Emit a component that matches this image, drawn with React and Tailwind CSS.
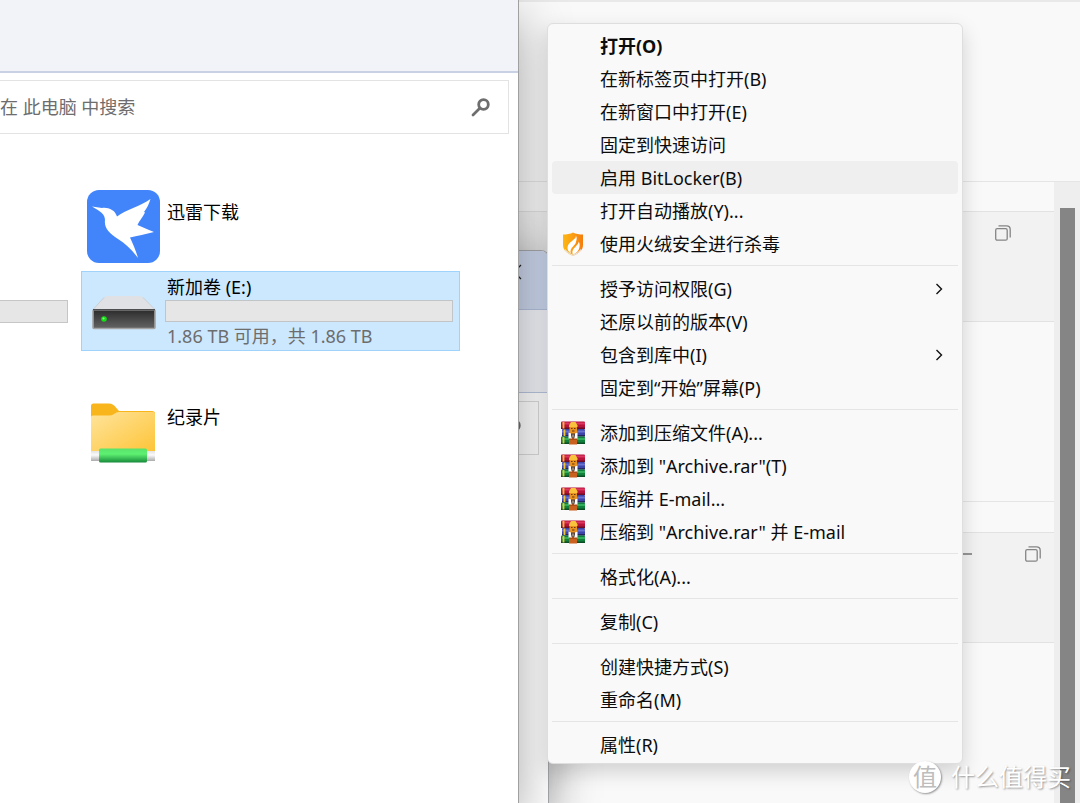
import React from 'react';

const menuGroups = [
  [
    { label: '打开(O)', bold: true },
    { label: '在新标签页中打开(B)' },
    { label: '在新窗口中打开(E)' },
    { label: '固定到快速访问' },
    { label: '启用 BitLocker(B)', active: true },
    { label: '打开自动播放(Y)...' },
    { label: '使用火绒安全进行杀毒', icon: ShieldIcon },
  ],
  [
    { label: '授予访问权限(G)', submenu: true },
    { label: '还原以前的版本(V)' },
    { label: '包含到库中(I)', submenu: true },
    { label: '固定到“开始”屏幕(P)' },
  ],
  [
    { label: '添加到压缩文件(A)...', icon: RarIcon },
    { label: '添加到 "Archive.rar"(T)', icon: RarIcon },
    { label: '压缩并 E-mail...', icon: RarIcon },
    { label: '压缩到 "Archive.rar" 并 E-mail', icon: RarIcon },
  ],
  [{ label: '格式化(A)...' }],
  [{ label: '复制(C)' }],
  [{ label: '创建快捷方式(S)' }, { label: '重命名(M)' }],
  [{ label: '属性(R)' }],
];

function ShieldIcon() {
  return (
    <svg width="24" height="24" viewBox="0 0 24 24" aria-hidden="true">
      <defs>
        <linearGradient id="shield" x1="0" y1="0" x2="1" y2="0">
          <stop offset="0" stopColor="#fdb813" />
          <stop offset="0.5" stopColor="#fb9d14" />
          <stop offset="1" stopColor="#f57c0c" />
        </linearGradient>
      </defs>
      <g transform="translate(1 0)">
        <path d="M11 0.5C13.500 2 17.500 2.600 21 2.600V13C21 18.500 16.500 21.500 11 23.800C5.500 21.500 1 18.500 1 13V2.600C4.500 2.600 8.500 2 11 0.500Z" fill="url(#shield)" />
        <path d="M13.800 3.800C14.500 7 8.500 9 6.200 13C4.500 16.500 6.200 19.500 8.800 21.300C8 18.500 9 16.500 11 14.500C13 12.500 13.800 11.500 14 9.800C15.200 6.500 14.800 5 13.800 3.800Z" fill="#fff" />
        <path d="M16.800 9.500C16.500 13 11.500 15.500 10.500 19C10.200 20.500 10.500 21.800 11 22.600C14 21.500 16 19.500 17 17C18 14.500 17.900 11.500 16.800 9.500Z" fill="#fff" />
        <path d="M3 17.500C5 20.500 8 22 11 23.300C14 22 17 20.500 19 17.500" fill="none" stroke="#e9e4dc" strokeWidth="1.200" />
      </g>
    </svg>
  );
}

function RarIcon() {
  return (
    <svg width="24" height="24" viewBox="0 0 24 24" aria-hidden="true">
      <rect x="0" y="0.500" width="24" height="7.500" rx="1" fill="#b5123c" />
      <rect x="1" y="1.500" width="23" height="2" fill="#dd3660" />
      <rect x="0" y="6.500" width="24" height="1.500" fill="#6f0d26" />
      <rect x="1" y="8" width="23" height="7.500" rx="1" fill="#3d45a8" />
      <rect x="1" y="9.500" width="23" height="2" fill="#6a74cf" />
      <rect x="1" y="14" width="23" height="1.500" fill="#23265f" />
      <rect x="0" y="15.500" width="24" height="7.500" rx="1" fill="#11803a" />
      <rect x="1" y="17" width="23" height="2" fill="#31ad5b" />
      <rect x="0" y="21.500" width="24" height="1.500" fill="#0a4d25" />
      <path d="M2.500 1V7.500M3.500 8.500V15M2.500 16V22.500" stroke="#f0c433" strokeWidth="1.800" />
      <rect x="8" y="16" width="8" height="7.500" fill="#c9601f" />
      <path d="M8 18H16" stroke="#8c3a10" />
      <rect x="8.500" y="2.500" width="7.500" height="11" rx="2" fill="#e89320" />
      <path d="M8 4.500L10 1H14.500L16.500 4.500V6H8Z" fill="#f8c23c" />
      <path d="M10 7.500H11.500M13 7.500H14.500M11 10H13.500" stroke="#6c3508" strokeWidth="1.200" />
      <path d="M7.500 11.500L10 12.500L11 17.500H7.500ZM16.500 11.500L14 12.500L13 17.500H16.500Z" fill="#fff" />
      <path d="M10 12.500H14L13.300 17H10.700Z" fill="#4a3530" />
      <rect x="11.300" y="13.500" width="1.400" height="3" fill="#b9a58c" />
    </svg>
  );
}

function CopyIcon() {
  return (
    <svg width="16" height="16" viewBox="0 0 16 16" fill="none" stroke="#858585" strokeWidth="1.300" aria-hidden="true">
      <rect x="0.700" y="3.700" width="11.500" height="11.500" rx="1.500" />
      <path d="M3.500 0.800H11.500Q15.200 0.800 15.200 4.500V12.500" />
    </svg>
  );
}

function BirdIcon() {
  return (
    <svg width="73" height="73" viewBox="0 0 73 73" aria-hidden="true">
      <rect width="73" height="73" rx="12" fill="#4285fb" />
      <path d="M5 16.500L15 18C18 17.500 22 18 25 20C28 21.500 29 24 30 26.500C38 20 54 16 63.500 9C62 14 60 18 57 22L58 22.500C56 27 52 31 50.500 35C56 37 61 40 67 42C59 44 50 46 43 47.500C46 54 49 61 51 68C45 60 38 53 31 49C22 43 17 38 18 30C18 24 13 21 5 16.500Z" fill="#fff" />
    </svg>
  );
}

function DriveIcon() {
  return (
    <svg width="64" height="34" viewBox="0 0 64 34" aria-hidden="true">
      <defs>
        <linearGradient id="drive" x1="0" y1="0" x2="0" y2="1">
          <stop offset="0" stopColor="#2c2c2c" />
          <stop offset="1" stopColor="#646464" />
        </linearGradient>
      </defs>
      <path d="M14.500 0H48.500L51 1.500L63 13.500H1L12 1.500Z" fill="#dfe1e4" />
      <path d="M51 1.500L63 13.500M12 1.500L1 13.500" stroke="#c6c9cd" strokeWidth="0.800" />
      <rect x="1" y="14" width="62" height="18.500" rx="1" fill="url(#drive)" stroke="#a3a3a3" strokeWidth="1.600" />
      <path d="M1 13.800H63" stroke="#242424" />
      <circle cx="12" cy="23" r="2.800" fill="#16dc16" />
      <circle cx="11.500" cy="22.500" r="1" fill="#9bff8f" />
    </svg>
  );
}

function FolderIcon() {
  return (
    <svg width="66" height="60" viewBox="0 0 66 60" aria-hidden="true">
      <defs>
        <linearGradient id="folder" x1="0" y1="0" x2="1" y2="1">
          <stop offset="0" stopColor="#ffe49c" />
          <stop offset="1" stopColor="#fdc437" />
        </linearGradient>
        <linearGradient id="cable" x1="0" y1="0" x2="0" y2="1">
          <stop offset="0" stopColor="#5be36c" />
          <stop offset="0.400" stopColor="#5df071" />
          <stop offset="1" stopColor="#178a3a" />
        </linearGradient>
        <linearGradient id="pipe" x1="0" y1="0" x2="0" y2="1">
          <stop offset="0" stopColor="#e3e3e3" />
          <stop offset="0.400" stopColor="#fafafa" />
          <stop offset="1" stopColor="#ababab" />
        </linearGradient>
      </defs>
      <path d="M1 3Q1 0.500 3.500 0.500H19Q23 0.500 25.500 4L29 8H62Q65 8 65 11V20H1Z" fill="#f9b61c" />
      <path d="M1 14Q1 12.500 3 12.500H19Q22 12.500 24 11L26.500 9.500Q27.500 9 29 9H63Q65 9 65 11V49H1Z" fill="url(#folder)" />
      <rect x="1" y="48" width="64" height="10" fill="url(#pipe)" />
      <rect x="9" y="45.500" width="48" height="14" rx="1.500" fill="url(#cable)" />
    </svg>
  );
}

function SearchIcon() {
  return (
    <svg width="19" height="19" viewBox="0 0 19 19" fill="none" stroke="#6e6e6e" aria-hidden="true">
      <circle cx="12.500" cy="6.500" r="4.800" strokeWidth="2.800" />
      <path d="M9 10L2 17" strokeWidth="2.800" strokeLinecap="round" />
    </svg>
  );
}

function Browser() {
  return (
    <div className="flex min-h-screen flex-col border-t-2 border-[#e9e9e9] bg-[#f9f9f9]">
      <div className="h-[180px] shrink-0 border-b border-[#e5e5e5]" />
      <div className="flex flex-1">
        <div className="flex-1 pt-[29px]">
          <div className="flex h-[111px] justify-end border-y border-[#e2e2e2] bg-[#f2f2f2] pt-[13px] pr-[43px]">
            <button aria-label="还原" className="h-4 w-4"><CopyIcon /></button>
          </div>
          <div className="h-[180px] border-b border-[#e5e5e5]" />
          <div className="mt-[30px] flex h-[111px] justify-end gap-[53px] border-y border-[#e2e2e2] bg-[#f2f2f2] pt-[13px] pr-[13px]">
            <button aria-label="最小化" className="flex h-4 w-4 items-center">
              <span className="h-[2px] w-full bg-[#959595]" />
            </button>
            <button aria-label="还原" className="h-4 w-4"><CopyIcon /></button>
          </div>
        </div>
        <div className="flex w-[26px] justify-center bg-[#eeeeee] pt-[26px]">
          <div className="w-[15px] bg-[#858585]" />
        </div>
      </div>
    </div>
  );
}

function BackWindow() {
  return (
    <div className="absolute top-[250px] bottom-0 left-0 w-[549px] overflow-hidden rounded-tr-lg border-t border-r border-[#a5a7ab] bg-white shadow-[0_12px_50px_rgba(0,0,0,0.4)]">
      <div className="flex h-[59px] justify-end border-b border-[#b3c0dc] bg-[#cbd6ec] pt-[12px] pr-[25px]">
        <svg width="12" height="18" viewBox="0 0 12 18" fill="none" stroke="#222" strokeWidth="1.300" aria-hidden="true">
          <path d="M10 2L3 9L10 16" />
        </svg>
      </div>
      <div className="h-[83px] border-b border-[#b9c6df] bg-[#f0f2f8]" />
      <div className="mt-[8px] mr-[9px] flex h-[54px] items-center justify-end border border-[#dcdcdc] pr-[17px]">
        <SearchIcon />
      </div>
    </div>
  );
}

function Explorer() {
  return (
    <div className="absolute inset-y-0 left-0 flex w-[519px] flex-col border-r border-[#a0a0a0] bg-white shadow-[0_20px_50px_rgba(0,0,0,0.35)]">
      <div className="h-[73px] border-b-2 border-[#c9d1e4] bg-[#f1f3f9]" />
      <label className="mt-[7px] mr-[9px] flex h-[54px] items-center border border-l-0 border-[#e3e3e3] pr-[18px]">
        <input
          type="search"
          aria-label="搜索"
          placeholder="在 此电脑 中搜索"
          className="min-w-0 flex-1 bg-transparent text-lg text-black outline-none placeholder:text-[#6d6d6d]"
        />
        <SearchIcon />
      </label>
      <div className="flex gap-[13px] pt-[56px]">
        <div className="mt-[110px] h-[23px] w-[68px] border border-l-0 border-[#c6c6c6] bg-[#e6e6e6]" />
        <div className="w-[379px] text-lg leading-6 text-black">
          <button className="flex w-full gap-[7px] pl-[6px] text-left">
            <BirdIcon />
            <span className="pt-[10px]">迅雷下载</span>
          </button>
          <button className="mt-[8px] flex h-20 w-full items-start gap-[9px] border border-[#a0d3fb] bg-[#cce8ff] pr-[6px] pl-[10px] text-left">
            <span className="pt-[24px]"><DriveIcon /></span>
            <span className="flex-1 pt-[3px]">
              <span className="block pl-[2px]">新加卷 (E:)</span>
              <span className="mt-px block h-[22px] border border-[#c2c5c8] bg-[#e6e6e6]" />
              <span className="mt-[2px] block pl-[2px] text-[#6d6d6d]">1.86 TB 可用，共 1.86 TB</span>
            </span>
          </button>
          <button className="mt-[52px] flex w-full gap-[11px] pl-[9px] text-left">
            <FolderIcon />
            <span className="pt-[2px]">纪录片</span>
          </button>
        </div>
      </div>
    </div>
  );
}

function MenuItem({ item }) {
  const Icon = item.icon;
  return (
    <button
      role="menuitem"
      className={`flex h-[33px] w-full items-center rounded pr-[15px] pl-[9px] text-left ${item.bold ? 'font-bold' : ''} ${item.active ? 'bg-[#efefef]' : 'hover:bg-[#efefef]'}`}
    >
      <span className="flex w-[39px]">{Icon && <Icon />}</span>
      <span className="flex-1 whitespace-nowrap">{item.label}</span>
      {item.submenu && (
        <svg width="8" height="12" viewBox="0 0 8 12" fill="none" stroke="#111" strokeWidth="1.400" aria-hidden="true">
          <path d="M1.500 1L6.500 6L1.500 11" />
        </svg>
      )}
    </button>
  );
}

function ContextMenu() {
  return (
    <div
      role="menu"
      className="absolute top-[23px] left-[547px] w-[416px] rounded-md border border-[#dedede] bg-[#f9f9f9] px-1 pt-[5px] pb-[2px] text-lg text-[#0c0c0c] shadow-[0_8px_20px_rgba(0,0,0,0.16)]"
    >
      {menuGroups.map((group, i) => (
        <React.Fragment key={i}>
          {i > 0 && <div role="separator" className="mt-[5px] mb-[6px] h-px bg-[#e5e5e5]" />}
          {group.map((item) => (
            <MenuItem key={item.label} item={item} />
          ))}
        </React.Fragment>
      ))}
    </div>
  );
}

function Watermark() {
  return (
    <div className="absolute right-[9px] bottom-[8px] flex items-center gap-[10px] text-white">
      <span className="flex h-8 w-8 items-center justify-center rounded-full bg-white text-2xl leading-none text-[#bdbdbd] shadow-[1px_1px_2px_rgba(0,0,0,0.4)]">
        值
      </span>
      <span className="text-2xl leading-9 [text-shadow:1px_1px_2px_rgba(0,0,0,0.4)]">什么值得买</span>
    </div>
  );
}

export default function App() {
  return (
    <div className="relative min-h-screen overflow-hidden font-['Noto_Sans','Noto_Sans_CJK_SC',sans-serif]">
      <Browser />
      <BackWindow />
      <Explorer />
      <ContextMenu />
      <Watermark />
    </div>
  );
}
